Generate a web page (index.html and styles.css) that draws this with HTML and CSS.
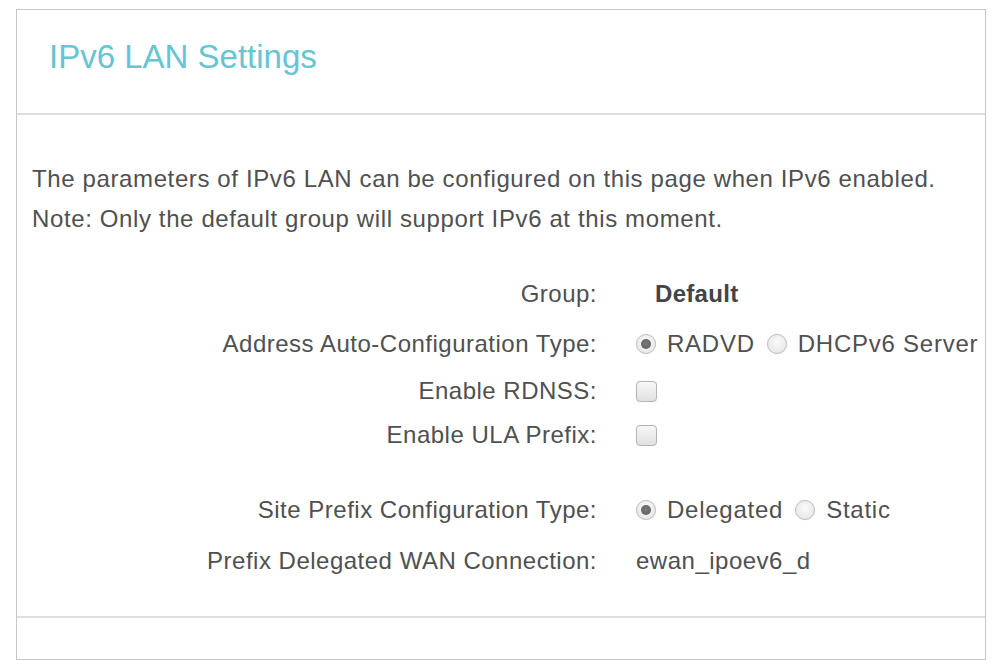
FILE: index.html
```html
<!DOCTYPE html>
<html lang="en">
<head>
<meta charset="utf-8">
<title>IPv6 LAN Settings</title>
<link rel="stylesheet" href="styles.css">
</head>
<body>
<div class="panel">
  <div class="panel-head">
    <h1 class="panel-title">IPv6 LAN Settings</h1>
  </div>
  <div class="panel-body">
    <p class="intro">The parameters of IPv6 LAN can be configured on this page when IPv6 enabled.<br>Note: Only the default group will support IPv6 at this moment.</p>
    <div class="form">
      <div class="row row-group">
        <div class="label">Group:</div>
        <div class="value"><span class="strong">Default</span></div>
      </div>
      <div class="row row-addr">
        <div class="label">Address Auto-Configuration Type:</div>
        <div class="value">
          <span class="radio checked"></span><span class="opt">RADVD</span>
          <span class="radio"></span><span class="opt">DHCPv6 Server</span>
        </div>
      </div>
      <div class="row row-rdnss">
        <div class="label">Enable RDNSS:</div>
        <div class="value"><span class="check"></span></div>
      </div>
      <div class="row row-ula">
        <div class="label">Enable ULA Prefix:</div>
        <div class="value"><span class="check"></span></div>
      </div>
      <div class="row row-site">
        <div class="label">Site Prefix Configuration Type:</div>
        <div class="value">
          <span class="radio checked"></span><span class="opt">Delegated</span>
          <span class="radio"></span><span class="opt">Static</span>
        </div>
      </div>
      <div class="row row-wan">
        <div class="label">Prefix Delegated WAN Connection:</div>
        <div class="value"><span class="plain">ewan_ipoev6_d</span></div>
      </div>
    </div>
  </div>
  <div class="panel-foot"></div>
</div>
</body>
</html>
```

FILE: styles.css
```css
html, body {
  margin: 0;
  padding: 0;
  background: #ffffff;
}

body {
  font-family: "Liberation Sans", Arial, sans-serif;
  color: #505050;
}

.panel {
  margin: 9px 0 0 16px;
  width: 968px;
  border: 1px solid #c6c6c6;
  background: #ffffff;
}

.panel-head {
  height: 105px;
  box-sizing: border-box;
  padding: 27px 0 0 32px;
  border-bottom: 2px solid #dedede;
}

.panel-title {
  margin: 0;
  font-size: 33px;
  line-height: 40px;
  font-weight: normal;
  color: #66c4d3;
}

.panel-body {
  padding: 44px 0 29px 0;
  border-bottom: 2px solid #dedede;
}

.intro {
  margin: 0 0 30px 0;
  padding-left: 15px;
  font-size: 24px;
  letter-spacing: 0.62px;
  line-height: 40px;
  white-space: nowrap;
}

.form {
  display: flex;
  flex-direction: column;
}

.row {
  display: grid;
  grid-template-columns: 580px 1fr;
  align-items: center;
  font-size: 24px;
  letter-spacing: 0.5px;
}

.row-group { height: 50px; }
.row-addr { height: 50px; }
.row-rdnss { height: 44px; }
.row-ula { height: 44px; }
.row-site { height: 50px; margin-top: 28px; }
.row-wan { height: 52px; }

.label {
  text-align: right;
  white-space: nowrap;
  color: #505050;
}

.value {
  display: flex;
  align-items: center;
  padding-left: 39px;
  white-space: nowrap;
  color: #505050;
  letter-spacing: 0.75px;
}

.strong {
  font-weight: bold;
  color: #444444;
  margin-left: 19px;
  letter-spacing: 0.3px;
}

.plain {
  margin-left: 0;
  letter-spacing: 0.5px;
}

.opt {
  margin: 0 12px 0 11px;
}

.radio {
  width: 20px;
  height: 20px;
  box-sizing: border-box;
  border-radius: 50%;
  border: 1px solid #c0c0c0;
  background: radial-gradient(circle at 50% 40%, #fafafa 0%, #e2e2e2 100%);
  box-shadow: 0 0 1px rgba(0,0,0,0.2);
  position: relative;
  flex: none;
}

.radio.checked::after {
  content: "";
  position: absolute;
  left: 4px;
  top: 4px;
  width: 10px;
  height: 10px;
  border-radius: 50%;
  background: radial-gradient(circle at 50% 45%, #7a7a7a 0%, #5a5a5a 100%);
}

.check {
  width: 21px;
  height: 21px;
  box-sizing: border-box;
  border: 1px solid #b5b5b5;
  border-radius: 4px;
  background: linear-gradient(#f7f7f7, #e0e0e0);
  box-shadow: 0 0 1px rgba(0,0,0,0.15);
  margin-left: 0;
  flex: none;
}

.panel-foot {
  height: 41px;
}
```
